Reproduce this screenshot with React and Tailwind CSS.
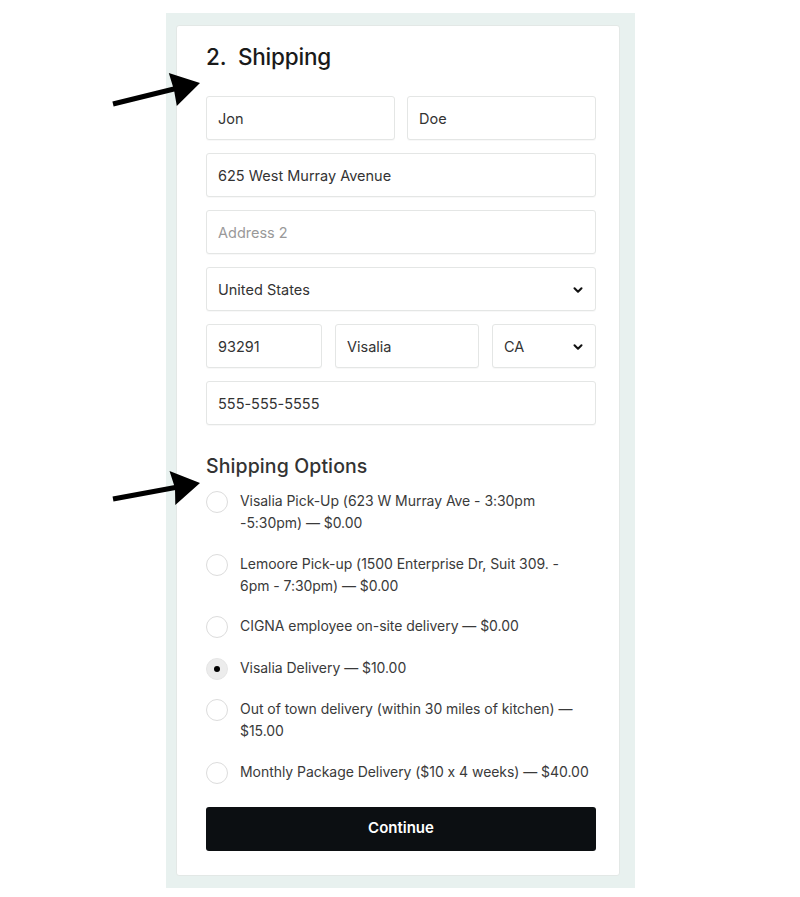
import React, { useState } from 'react'
import { ChevronDown } from 'lucide-react'

const options = [
  { id: 'visalia-pickup', lines: ['Visalia Pick-Up (623 W Murray Ave - 3:30pm', '-5:30pm) — $0.00'] },
  { id: 'lemoore-pickup', lines: ['Lemoore Pick-up (1500 Enterprise Dr, Suit 309. -', '6pm - 7:30pm) — $0.00'] },
  { id: 'cigna', lines: ['CIGNA employee on-site delivery — $0.00'] },
  { id: 'visalia-delivery', lines: ['Visalia Delivery — $10.00'] },
  { id: 'out-of-town', lines: ['Out of town delivery (within 30 miles of kitchen) —', '$15.00'] },
  { id: 'monthly', lines: ['Monthly Package Delivery ($10 x 4 weeks) — $40.00'] },
]

const Field = ({ value, placeholder, className = '', select }) => (
  <div className={`relative h-[44px] rounded-[3px] border border-[#e4e6e5] bg-white shadow-[0_1px_1px_rgba(0,0,0,0.03)] ${className}`}>
    <input
      className="h-full w-full rounded-[3px] bg-transparent px-[11px] text-[14.5px] text-[#333] placeholder-[#999] outline-none"
      defaultValue={value}
      placeholder={placeholder}
    />
    {select && (
      <ChevronDown className="pointer-events-none absolute right-[10px] top-[15px] text-[#111]" size={14} strokeWidth={3.5} />
    )}
  </div>
)

const Arrows = () => (
  <svg className="pointer-events-none absolute left-0 top-0" width="800" height="897">
    {/* top arrow */}
    <line x1="113" y1="91" x2="178" y2="75" stroke="#000" strokeWidth="5" />
    <polygon points="200,70 168.8,60 174,77 176.8,93" fill="#000" />
    {/* second arrow */}
    <line x1="113" y1="486" x2="178" y2="474" stroke="#000" strokeWidth="5" />
    <polygon points="200,470 169.5,458 175,475 175.3,492" fill="#000" />
  </svg>
)

export default function App() {
  const [picked, setPicked] = useState('visalia-delivery')

  return (
    <div className="relative min-h-[897px] w-[800px] bg-white font-['Inter',sans-serif] [font-feature-settings:'calt'_0]">
      <div className="ml-[166px] mt-[13px] w-[469px] bg-[#e8f1ef] pb-[12px] pl-[10px] pr-[15px] pt-[12px]">
        <div className="rounded-[3px] border border-[#e3e8e6] bg-white pb-[24px] pl-[29px] pr-[23px] pt-[16px]">
          <h2 className="text-[22.5px] font-medium leading-[30px] tracking-[-0.2px] text-[#1a1a1a]">2.&nbsp; Shipping</h2>

          <div className="mt-[24px] flex flex-col gap-[13px]">
            <div className="flex gap-[12px]">
              <Field value="Jon" className="flex-1" />
              <Field value="Doe" className="flex-1" />
            </div>
            <Field value="625 West Murray Avenue" />
            <Field placeholder="Address 2" />
            <Field value="United States" select />
            <div className="flex gap-[13px]">
              <Field value="93291" className="w-[116px]" />
              <Field value="Visalia" className="w-[144px]" />
              <Field value="CA" className="flex-1" select />
            </div>
            <Field value="555-555-5555" />
          </div>

          <h3 className="mt-[28px] text-[19.5px] font-medium leading-[26px] tracking-[0.1px] text-[#333]">Shipping Options</h3>

          <div className="mt-[11px] flex flex-col gap-[18.5px]">
            {options.map(o => (
              <label key={o.id} className="flex cursor-pointer items-start" onClick={() => setPicked(o.id)}>
                <span
                  className={`mr-[12px] mt-[1px] flex h-[22px] w-[22px] shrink-0 items-center justify-center rounded-full border ${
                    picked === o.id ? 'border-[#e6e6e6] bg-[#ececec]' : 'border-[#dcdcdc] bg-white'
                  }`}
                >
                  {picked === o.id && <span className="h-[6px] w-[6px] rounded-full bg-black" />}
                </span>
                <span className="whitespace-nowrap text-[14px] leading-[22px] tracking-[-0.05px] text-[#3a3a3a]">
                  {o.lines.map((l, i) => (
                    <span key={i} className="block">{l}</span>
                  ))}
                </span>
              </label>
            ))}
          </div>

          <button className="mt-[23px] h-[44px] w-full rounded-[3px] bg-[#0c0f12] text-[15px] font-semibold text-white">
            Continue
          </button>
        </div>
      </div>
      <Arrows />
    </div>
  )
}
